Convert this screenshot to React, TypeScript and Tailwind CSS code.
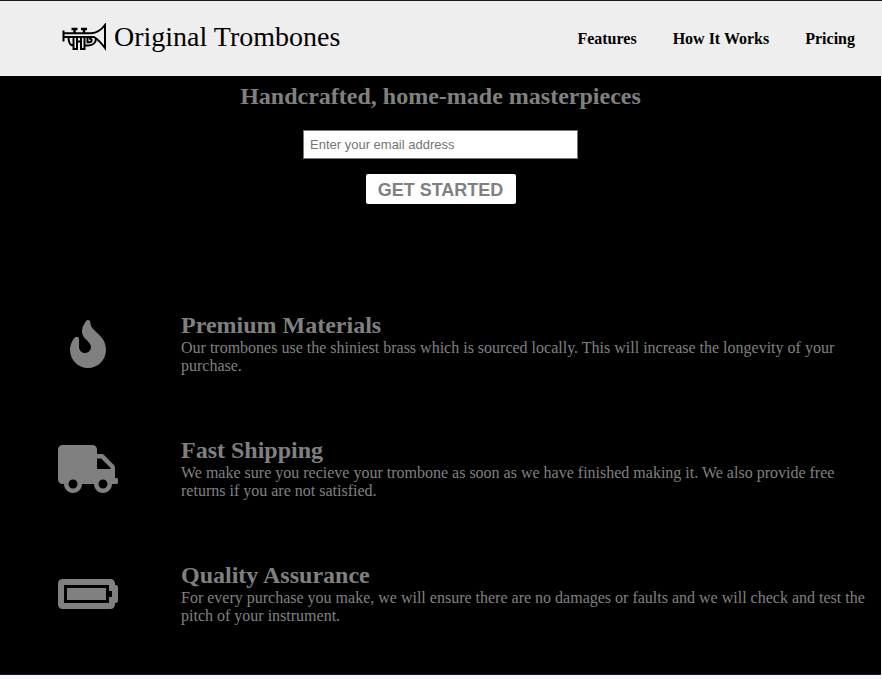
import React from "react";
import { FaBatteryFull, FaFire, FaTruck } from "react-icons/fa";

function Trumpet() {
  return (
    <svg viewBox="0 0 44 28" className="h-7 w-11 shrink-0" fill="none" stroke="#000" strokeWidth="2" aria-hidden="true">
      <path d="M1.500 7.500V18.500M1.500 10.300H29C36 9.800 40 6 43 2V25C40 21 37 17 32 14H1.500" />
      <path d="M9.500 6H15.500M12.500 6V10M19 6H25M22 6V10" strokeWidth="2.400" />
      <path d="M6.500 14C6.500 19 8 22.500 11.500 22.500M11.500 14V26H15V14M19 14V26H22.500V14M15 18.500H19" />
      <path d="M22.500 22.500H26.500C30.500 22.500 34 20 34 15M25.500 14V19.200H27C30.500 19.200 30.500 15.500 27 15.500" />
    </svg>
  );
}

const links = [
  { label: "Features", href: "#features" },
  { label: "How It Works", href: "#how-it-works" },
  { label: "Pricing", href: "#pricing" },
];

const features = [
  {
    icon: FaFire,
    title: "Premium Materials",
    text: "Our trombones use the shiniest brass which is sourced locally. This will increase the longevity of your purchase.",
  },
  {
    icon: FaTruck,
    title: "Fast Shipping",
    text: "We make sure you recieve your trombone as soon as we have finished making it. We also provide free returns if you are not satisfied.",
  },
  {
    icon: FaBatteryFull,
    title: "Quality Assurance",
    text: "For every purchase you make, we will ensure there are no damages or faults and we will check and test the pitch of your instrument.",
  },
];

export default function App() {
  return (
    <div className="min-h-screen bg-[#f8f8fc] pr-px font-['Liberation_Serif',serif] text-base/[18px] text-[#808080]">
      <header className="-mr-px flex h-[76px] items-center justify-between border-t border-[#1c1528] bg-[#eee] pr-[27px] pl-[62px] text-black">
        <a href="#home" className="flex items-center gap-2 pb-1 text-[28px]/8">
          <Trumpet />
          <span>Original Trombones</span>
        </a>
        <nav>
          <ul className="flex gap-9 font-bold">
            {links.map((link) => (
              <li key={link.href}>
                <a href={link.href}>{link.label}</a>
              </li>
            ))}
          </ul>
        </nav>
      </header>
      <main className="border-b border-[#1c1528] bg-black pb-[49px]">
        <section className="flex flex-col items-center pt-[7px]">
          <h2 className="text-2xl/[27px] font-bold">Handcrafted, home-made masterpieces</h2>
          <form className="mt-5 flex flex-col items-center gap-[15px]" onSubmit={(e) => e.preventDefault()}>
            <input
              type="email"
              aria-label="Email address"
              placeholder="Enter your email address"
              className="h-[29px] w-[275px] border border-[#767676] bg-white px-1.5 font-['Liberation_Sans',sans-serif] text-[13px] text-black placeholder:text-[#757575]"
            />
            <button
              type="submit"
              className="h-[30px] w-[150px] rounded-xs bg-white pt-0.5 font-['Liberation_Sans',sans-serif] text-[18px]/7 font-black"
            >
              GET STARTED
            </button>
          </form>
        </section>
        <section id="features" className="mt-[108px] flex flex-col gap-[62px]">
          {features.map(({ icon: Icon, title, text }) => (
            <article key={title} className="flex items-center">
              <div className="flex w-44 shrink-0 justify-center">
                <Icon className="h-12 w-[60px]" aria-hidden="true" />
              </div>
              <div className="pr-3 pl-[5px]">
                <h3 className="text-2xl/[27px] font-bold">{title}</h3>
                <p>{text}</p>
              </div>
            </article>
          ))}
        </section>
      </main>
    </div>
  );
}
